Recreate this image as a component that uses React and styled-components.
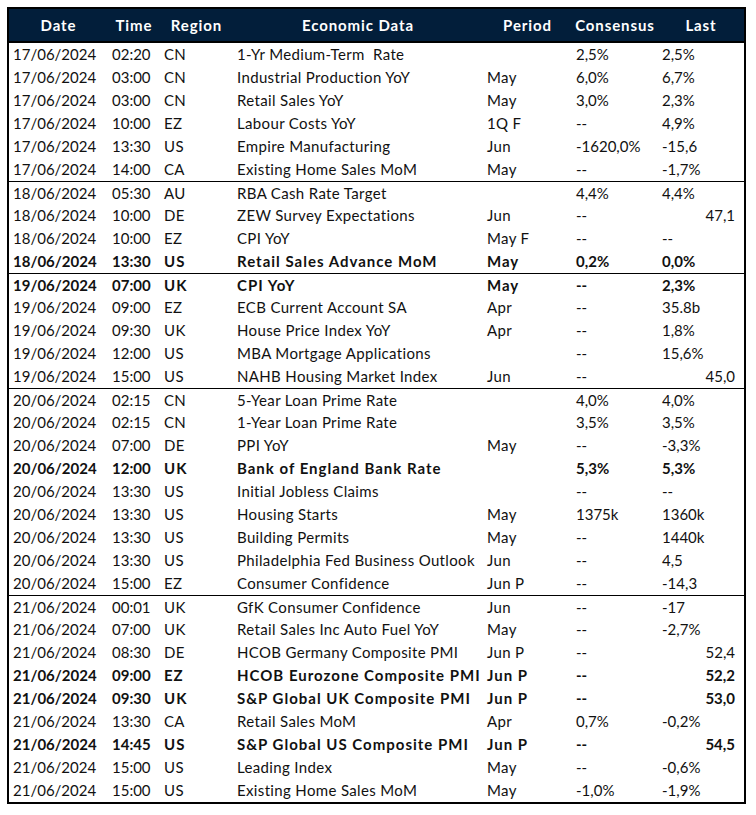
import React from "react";
import styled, { createGlobalStyle } from "styled-components";

const Global = createGlobalStyle`
  html, body { margin: 0; padding: 0; background: #fff; }
  body { font-family: Lato, "Liberation Sans", sans-serif; }
`;

const COLS = "99px 52px 73px 250px 89px 86px 86px";

const Page = styled.div`
  padding: 7px;
  background: #fff;
`;

const Table = styled.div`
  width: 735px;
  border: 2px solid #000;
  display: flex;
  flex-direction: column;
`;

const Header = styled.div`
  display: grid;
  grid-template-columns: ${COLS};
  height: 32px;
  background: #021e3a;
  border-bottom: 2px solid #000;
  align-items: center;
`;

const HeadCell = styled.div`
  color: #fff;
  font-weight: 700;
  font-size: 15px;
  letter-spacing: 0.9px;
  text-align: center;
  white-space: nowrap;
`;

const Row = styled.div`
  display: grid;
  grid-template-columns: ${COLS};
  height: 23px;
  box-sizing: border-box;
  align-items: center;
  border-top: ${(p) => (p.$sep ? "1px solid #000" : "none")};
  font-weight: ${(p) => (p.$bold ? 700 : 400)};
  --ls: ${(p) => (p.$bold ? "1px" : "0.35px")};
`;

const Cell = styled.div`
  font-size: 15px;
  color: #111;
  white-space: pre;
  overflow: visible;
  padding: ${(p) => (p.$right ? "0 9px 0 0" : "0 0 0 4px")};
  text-align: ${(p) => (p.$right ? "right" : "left")};
  letter-spacing: ${(p) => (p.$text ? "var(--ls)" : "0")};
  line-height: 23px;
`;

const headers = ["Date", "Time", "Region", "Economic Data", "Period", "Consensus", "Last"];

// [date, time, region, data, period, consensus, last, bold, lastRight, sepBefore]
const rows = [
  ["17/06/2024", "02:20", "CN", "1-Yr Medium-Term  Rate", "", "2,5%", "2,5%"],
  ["17/06/2024", "03:00", "CN", "Industrial Production YoY", "May", "6,0%", "6,7%"],
  ["17/06/2024", "03:00", "CN", "Retail Sales YoY", "May", "3,0%", "2,3%"],
  ["17/06/2024", "10:00", "EZ", "Labour Costs YoY", "1Q F", "--", "4,9%"],
  ["17/06/2024", "13:30", "US", "Empire Manufacturing", "Jun", "-1620,0%", "-15,6"],
  ["17/06/2024", "14:00", "CA", "Existing Home Sales MoM", "May", "--", "-1,7%"],
  ["18/06/2024", "05:30", "AU", "RBA Cash Rate Target", "", "4,4%", "4,4%", false, false, true],
  ["18/06/2024", "10:00", "DE", "ZEW Survey Expectations", "Jun", "--", "47,1", false, true],
  ["18/06/2024", "10:00", "EZ", "CPI YoY", "May F", "--", "--"],
  ["18/06/2024", "13:30", "US", "Retail Sales Advance MoM", "May", "0,2%", "0,0%", true],
  ["19/06/2024", "07:00", "UK", "CPI YoY", "May", "--", "2,3%", true, false, true],
  ["19/06/2024", "09:00", "EZ", "ECB Current Account SA", "Apr", "--", "35.8b"],
  ["19/06/2024", "09:30", "UK", "House Price Index YoY", "Apr", "--", "1,8%"],
  ["19/06/2024", "12:00", "US", "MBA Mortgage Applications", "", "--", "15,6%"],
  ["19/06/2024", "15:00", "US", "NAHB Housing Market Index", "Jun", "--", "45,0", false, true],
  ["20/06/2024", "02:15", "CN", "5-Year Loan Prime Rate", "", "4,0%", "4,0%", false, false, true],
  ["20/06/2024", "02:15", "CN", "1-Year Loan Prime Rate", "", "3,5%", "3,5%"],
  ["20/06/2024", "07:00", "DE", "PPI YoY", "May", "--", "-3,3%"],
  ["20/06/2024", "12:00", "UK", "Bank of England Bank Rate", "", "5,3%", "5,3%", true],
  ["20/06/2024", "13:30", "US", "Initial Jobless Claims", "", "--", "--"],
  ["20/06/2024", "13:30", "US", "Housing Starts", "May", "1375k", "1360k"],
  ["20/06/2024", "13:30", "US", "Building Permits", "May", "--", "1440k"],
  ["20/06/2024", "13:30", "US", "Philadelphia Fed Business Outlook", "Jun", "--", "4,5"],
  ["20/06/2024", "15:00", "EZ", "Consumer Confidence", "Jun P", "--", "-14,3"],
  ["21/06/2024", "00:01", "UK", "GfK Consumer Confidence", "Jun", "--", "-17", false, false, true],
  ["21/06/2024", "07:00", "UK", "Retail Sales Inc Auto Fuel YoY", "May", "--", "-2,7%"],
  ["21/06/2024", "08:30", "DE", "HCOB Germany Composite PMI", "Jun P", "--", "52,4", false, true],
  ["21/06/2024", "09:00", "EZ", "HCOB Eurozone Composite PMI", "Jun P", "--", "52,2", true, true],
  ["21/06/2024", "09:30", "UK", "S&P Global UK Composite PMI", "Jun P", "--", "53,0", true, true],
  ["21/06/2024", "13:30", "CA", "Retail Sales MoM", "Apr", "0,7%", "-0,2%"],
  ["21/06/2024", "14:45", "US", "S&P Global US Composite PMI", "Jun P", "--", "54,5", true, true],
  ["21/06/2024", "15:00", "US", "Leading Index", "May", "--", "-0,6%"],
  ["21/06/2024", "15:00", "US", "Existing Home Sales MoM", "May", "-1,0%", "-1,9%"],
];

export default function App() {
  return (
    <Page>
      <Global />
      <Table>
        <Header>
          {headers.map((h) => (
            <HeadCell key={h}>{h}</HeadCell>
          ))}
        </Header>
        {rows.map((r, i) => (
          <Row key={i} $bold={!!r[7]} $sep={!!r[9]}>
            <Cell>{r[0]}</Cell>
            <Cell>{r[1]}</Cell>
            <Cell $text>{r[2]}</Cell>
            <Cell $text>{r[3]}</Cell>
            <Cell $text>{r[4]}</Cell>
            <Cell>{r[5]}</Cell>
            <Cell $right={!!r[8]}>{r[6]}</Cell>
          </Row>
        ))}
      </Table>
    </Page>
  );
}
